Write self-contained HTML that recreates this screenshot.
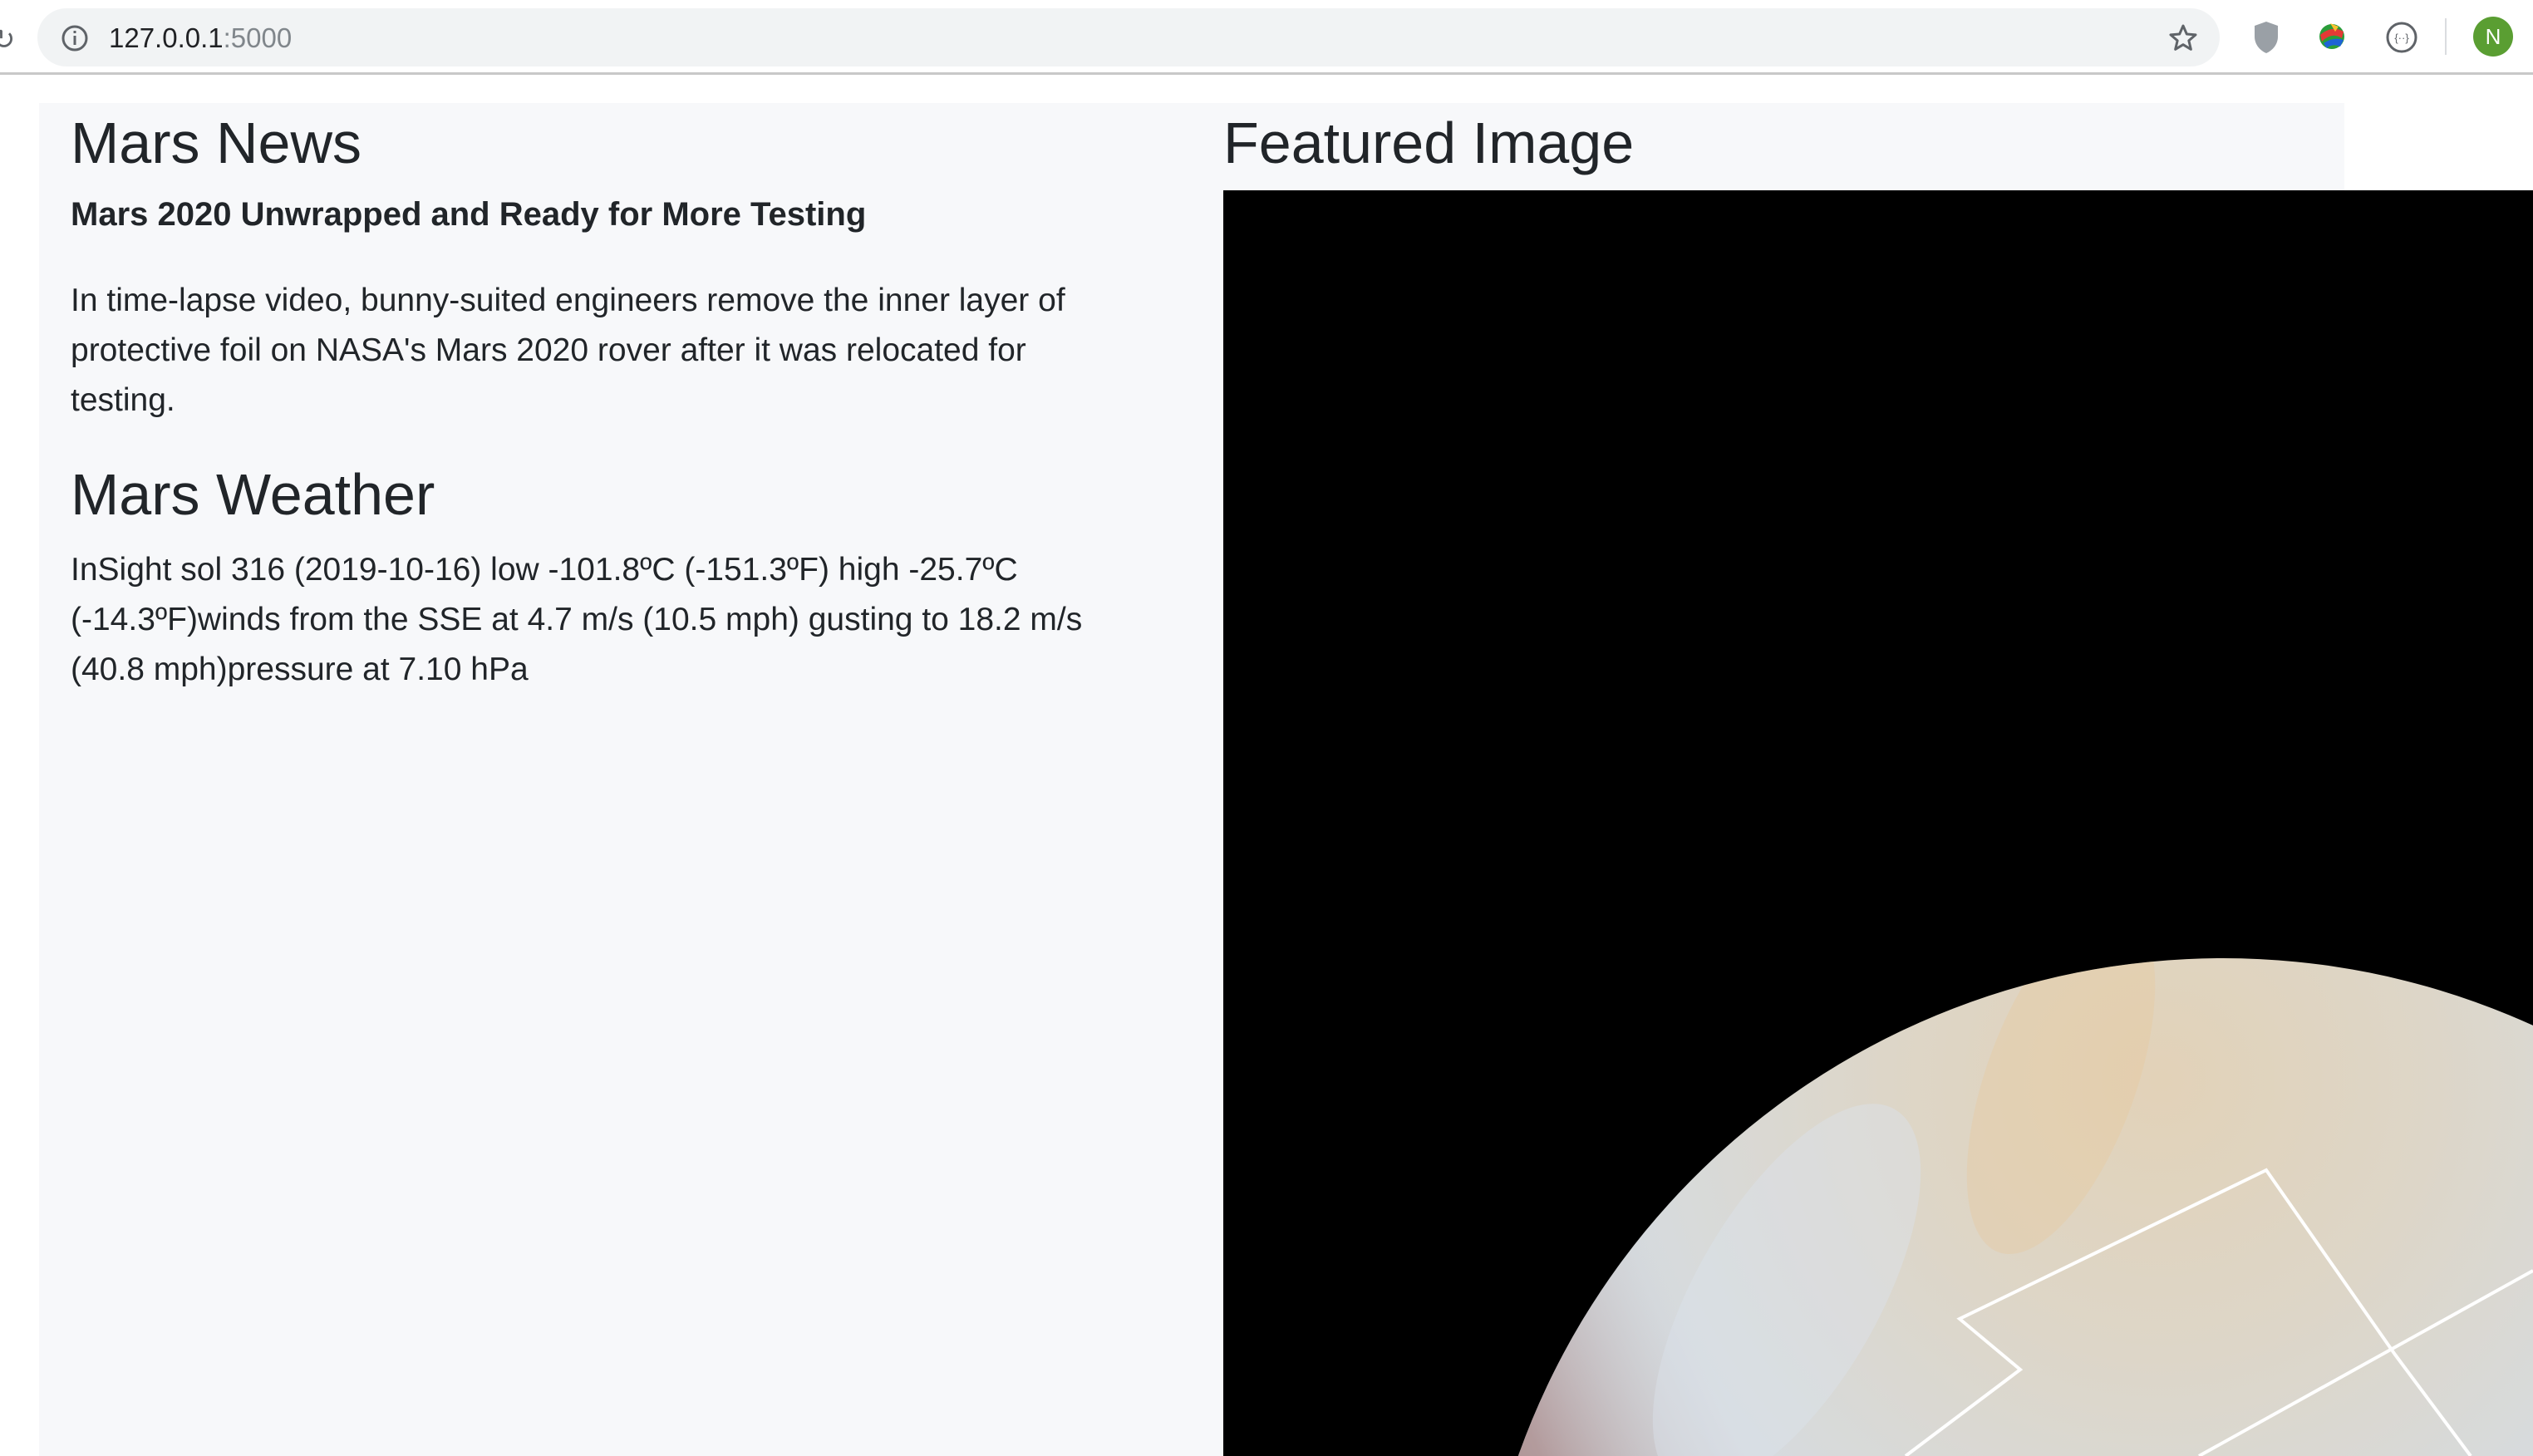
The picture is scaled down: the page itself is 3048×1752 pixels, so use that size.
<!DOCTYPE html>
<html><head><meta charset="utf-8"><style>
html,body{margin:0;padding:0;width:3048px;height:1752px;overflow:hidden;background:#fff;font-family:"Liberation Sans",sans-serif;color:#212529}
.bar{position:absolute;left:0;top:0;width:3048px;height:90px;background:#fff;border-bottom:3px solid #c8c8c8;box-sizing:border-box}
.url{position:absolute;left:45px;top:10px;width:2626px;height:70px;background:#f1f3f4;border-radius:35px}
.url .t{position:absolute;left:86px;top:17px;font-size:33px;color:#202124}
.url .t span{color:#80868b}
.box{position:absolute;left:47px;top:124px;width:2774px;height:1628px;background:#f7f8fa}
h1{position:absolute;margin:0;font-weight:normal;font-size:70px;line-height:80px}
.tt{position:absolute;left:85px;top:236px;font-weight:bold;font-size:40px;white-space:nowrap}
.p{position:absolute;left:85px;font-size:39px;line-height:60px;white-space:nowrap}
.img{position:absolute;left:1472px;top:229px;width:1576px;height:1523px;background:#000;overflow:hidden}
</style></head><body>
<div class="bar">
<div style="position:absolute;left:-10px;top:28px;font-size:34px;color:#5f6368">↻</div>
<div class="url">
<svg style="position:absolute;left:28px;top:19px" width="34" height="34" viewBox="0 0 34 34"><circle cx="17" cy="17" r="14" fill="none" stroke="#5f6368" stroke-width="3"/><rect x="15.5" y="14" width="3" height="11" fill="#5f6368"/><rect x="15.5" y="8" width="3" height="3" fill="#5f6368"/></svg>
<div class="t">127.0.0.1<span>:5000</span></div>
<svg style="position:absolute;left:2562px;top:16px" width="40" height="40" viewBox="0 0 24 24"><path d="M12 3l2.6 6 6.4.5-4.9 4.2 1.5 6.3L12 16.6 6.4 20l1.5-6.3L3 9.5 9.4 9z" fill="none" stroke="#5f6368" stroke-width="1.8" stroke-linejoin="round"/></svg>
</div>
<svg style="position:absolute;left:2710px;top:24px" width="34" height="42" viewBox="0 0 34 42"><path d="M17 2 L31 7 V20 C31 30 24 37 17 40 C10 37 3 30 3 20 V7 Z" fill="#9aa0a6"/></svg>
<svg style="position:absolute;left:2784px;top:22px" width="44" height="44" viewBox="0 0 44 44"><circle cx="22" cy="22" r="15" fill="#2a9d3a"/><path d="M8 20 Q22 8 36 16 L34 24 Q22 16 10 28Z" fill="#e53935"/><path d="M12 30 Q24 22 36 26 L32 34 Q22 30 16 36Z" fill="#1e63d6"/><path d="M20 6 L30 10 L26 16 Z" fill="#fbc02d"/></svg>
<svg style="position:absolute;left:2870px;top:25px" width="40" height="40" viewBox="0 0 40 40"><circle cx="20" cy="20" r="17" fill="none" stroke="#5f6368" stroke-width="3"/><text x="20" y="25" font-size="13" text-anchor="middle" fill="#5f6368" font-family="Liberation Sans">{··}</text></svg>
<div style="position:absolute;left:2942px;top:22px;width:2px;height:44px;background:#dadce0"></div>
<div style="position:absolute;left:2976px;top:20px;width:48px;height:48px;border-radius:50%;background:#5a9e32;color:#fff;font-size:26px;text-align:center;line-height:48px">N</div>
</div>
<div class="box"></div>
<h1 style="left:85px;top:132px">Mars News</h1>
<h1 style="left:1472px;top:132px">Featured Image</h1>
<div class="tt">Mars 2020 Unwrapped and Ready for More Testing</div>
<div class="p" style="top:332px">In time-lapse video, bunny-suited engineers remove the inner layer of<br>protective foil on NASA's Mars 2020 rover after it was relocated for<br>testing.</div>
<h1 style="left:85px;top:555px">Mars Weather</h1>
<div class="p" style="top:656px">InSight sol 316 (2019-10-16) low -101.8ºC (-151.3ºF) high -25.7ºC<br>(-14.3ºF)winds from the SSE at 4.7 m/s (10.5 mph) gusting to 18.2 m/s<br>(40.8 mph)pressure at 7.10 hPa</div>
<div class="img">
<svg width="1576" height="1523" viewBox="1472 229 1576 1523" style="display:block">
<defs>
<radialGradient id="g" cx="2600" cy="1300" r="950" gradientUnits="userSpaceOnUse">
<stop offset="0" stop-color="#e2d2b8"/><stop offset="0.35" stop-color="#ddd6c8"/><stop offset="0.7" stop-color="#d6dbdf"/><stop offset="0.92" stop-color="#cfd2d6"/><stop offset="1" stop-color="#bfb4b4"/></radialGradient>
<linearGradient id="r" x1="1830" y1="1700" x2="2050" y2="1600" gradientUnits="userSpaceOnUse"><stop offset="0" stop-color="#a07676" stop-opacity="0.6"/><stop offset="1" stop-color="#c8c8cc" stop-opacity="0"/></linearGradient>
<clipPath id="c"><circle cx="2675" cy="2053" r="900"/></clipPath>
</defs>
<circle cx="2675" cy="2053" r="900" fill="url(#g)"/>
<g clip-path="url(#c)">
<circle cx="2675" cy="2053" r="900" fill="url(#r)"/>
<ellipse cx="2150" cy="1560" rx="110" ry="260" fill="#dbe3ea" opacity="0.45" transform="rotate(30 2150 1560)"/>
<ellipse cx="2480" cy="1300" rx="90" ry="220" fill="#e8c89c" opacity="0.35" transform="rotate(20 2480 1300)"/>
</g>
<g fill="none" stroke="#fff" stroke-width="4">
<polyline points="2293,1752 2431,1648 2358,1587 2727,1408 2882,1630 2973,1752"/>
<polyline points="2646,1752 3048,1529"/>
</g>
</svg>
</div>
</body></html>
